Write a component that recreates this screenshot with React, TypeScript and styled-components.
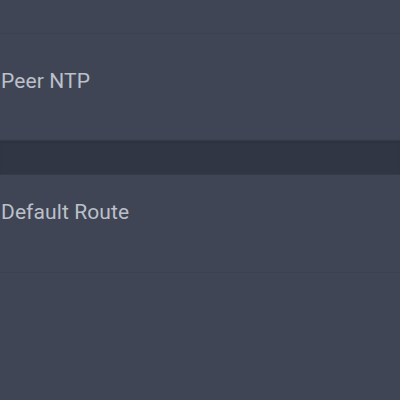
import React from 'react';
import styled, { createGlobalStyle } from 'styled-components';

const GlobalStyle = createGlobalStyle`
  html, body {
    margin: 0;
    padding: 0;
    background: #3f4555;
  }
`;

const Page = styled.div`
  width: 400px;
  height: 400px;
  overflow: hidden;
  background: #3f4555;
  font-family: Roboto, 'Noto Sans', sans-serif;
`;

const Row = styled.div<{ $height: number; $top: number }>`
  box-sizing: border-box;
  height: ${(p) => p.$height}px;
  padding: ${(p) => p.$top}px 0 0 1px;
  border-bottom: 1px solid #3b4150;
`;

const Label = styled.span`
  display: block;
  font-size: 21px;
  line-height: 24px;
  color: #bcc0c9;
  letter-spacing: 0.1px;
`;

const Band = styled.div`
  height: 33px;
  background: #313645;
  border-top: 1px solid #363b4a;
  border-bottom: 1px solid #363b4a;
  box-shadow: inset 0 2px 2px rgba(0, 0, 0, 0.08);
`;

export default function App(): JSX.Element {
  return (
    <Page>
      <GlobalStyle />
      <Row $height={34} $top={0} />
      <Row $height={106} $top={35}>
        <Label>Peer NTP</Label>
      </Row>
      <Band />
      <Row $height={98} $top={25}>
        <Label>Default Route</Label>
      </Row>
    </Page>
  );
}
